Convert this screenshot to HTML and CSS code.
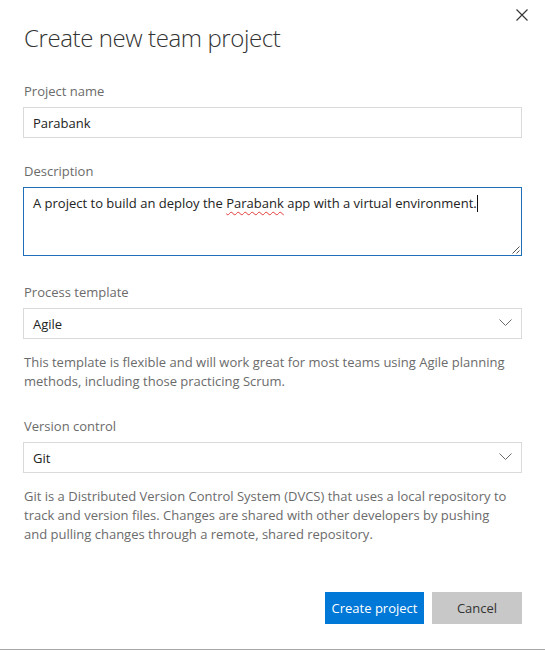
FILE: index.html
```html
<!DOCTYPE html>
<html lang="en">
<head>
<meta charset="utf-8">
<title>Create new team project</title>
<link rel="stylesheet" href="styles.css">
</head>
<body>
<div class="dialog">
  <button class="close" aria-label="Close">
    <svg width="12" height="12" viewBox="0 0 12 12"><path d="M0.5 0.5 L11.5 11.5 M11.5 0.5 L0.5 11.5" stroke="#333" stroke-width="1.1" fill="none"/></svg>
  </button>
  <h1 class="title">Create new team project</h1>

  <div class="field field-name">
    <label class="label">Project name</label>
    <div class="input">Parabank</div>
  </div>

  <div class="field field-desc">
    <label class="label">Description</label>
    <div class="textarea">A project to build an deploy the <span class="misspelled">Parabank</span> app with a virtual environment.<span class="caret"></span>
      <svg class="grip" width="8" height="8" viewBox="0 0 8 8"><path d="M7.5 0.5 L0.5 7.5 M7.5 4.5 L4.5 7.5" stroke="#555" stroke-width="1" fill="none"/></svg>
    </div>
  </div>

  <div class="field field-process">
    <label class="label">Process template</label>
    <div class="select"><span>Agile</span>
      <svg class="chevron" width="13" height="7" viewBox="0 0 13 7"><path d="M0.5 0.5 L6.5 6.5 L12.5 0.5" stroke="#6a6a6a" stroke-width="1" fill="none"/></svg>
    </div>
    <p class="help">This template is flexible and will work great for most teams using Agile planning methods, including those practicing Scrum.</p>
  </div>

  <div class="field field-vc">
    <label class="label">Version control</label>
    <div class="select"><span>Git</span>
      <svg class="chevron" width="13" height="7" viewBox="0 0 13 7"><path d="M0.5 0.5 L6.5 6.5 L12.5 0.5" stroke="#6a6a6a" stroke-width="1" fill="none"/></svg>
    </div>
    <p class="help">Git is a Distributed Version Control System (DVCS) that uses a local repository to track and version files. Changes are shared with other developers by pushing and pulling changes through a remote, shared repository.</p>
  </div>

  <div class="actions">
    <button class="btn btn-primary">Create project</button>
    <button class="btn btn-secondary">Cancel</button>
  </div>
</div>
</body>
</html>
```
FILE: styles.css
```css
html, body {
  margin: 0;
  padding: 0;
  background: #fff;
}

body {
  font-family: "Open Sans", "Noto Sans", sans-serif;
  font-size: 13px;
  color: #222;
}

.dialog {
  position: relative;
  box-sizing: border-box;
  height: 650px;
  padding: 22px 23px 25px;
  border-bottom: 1px solid #a8a8a8;
  display: flex;
  flex-direction: column;
}

.close {
  position: absolute;
  top: 9px;
  right: 17px;
  width: 12px;
  height: 12px;
  padding: 0;
  border: 0;
  background: none;
  display: flex;
}

.title {
  margin: 0 0 28px;
  padding-left: 1px;
  font-weight: 300;
  font-size: 24px;
  line-height: 32px;
  letter-spacing: -0.4px;
  color: #333;
}

.label {
  display: block;
  padding-left: 1px;
  font-size: 13px;
  line-height: 18px;
  color: #6b6b6b;
  margin-bottom: 7px;
}

.field-desc { margin-top: 24px; }
.field-process { margin-top: 27px; }
.field-vc { margin-top: 26px; }

.input,
.select,
.textarea {
  box-sizing: border-box;
  border: 1px solid #dadada;
  font-size: 13px;
  line-height: 18px;
  color: #222;
  padding: 0 9px;
}

.input {
  height: 31px;
  display: flex;
  align-items: center;
}

.select {
  height: 31px;
  display: flex;
  align-items: center;
  justify-content: space-between;
  padding-right: 9px;
}

.chevron {
  display: block;
  margin-top: -2px;
}

.textarea {
  position: relative;
  height: 69px;
  padding-top: 6px;
  border-color: #1f70b8;
}

.misspelled {
  text-decoration: underline wavy #e23a3a;
  text-decoration-thickness: 1px;
  text-underline-offset: 3px;
  text-decoration-skip-ink: none;
}

.caret {
  display: inline-block;
  width: 0;
  height: 17px;
  border-left: 1px solid #111;
  vertical-align: -4px;
}

.grip {
  position: absolute;
  right: 1px;
  bottom: 1px;
}

.help {
  margin: 14px 0 0;
  padding-left: 1px;
  max-width: 486px;
  font-size: 13px;
  line-height: 19px;
  color: #6b6b6b;
}

.actions {
  margin-top: auto;
  display: flex;
  justify-content: flex-end;
  gap: 8px;
}

.btn {
  height: 32px;
  border: 0;
  font-family: "Open Sans", "Noto Sans", sans-serif;
  font-size: 13px;
  cursor: pointer;
}

.btn-primary {
  background: #0078d7;
  color: #fff;
  padding: 0 6px;
  min-width: 99px;
}

.btn-secondary {
  background: #c8c8c8;
  color: #333;
  min-width: 90px;
  padding: 0 20px;
}
```
